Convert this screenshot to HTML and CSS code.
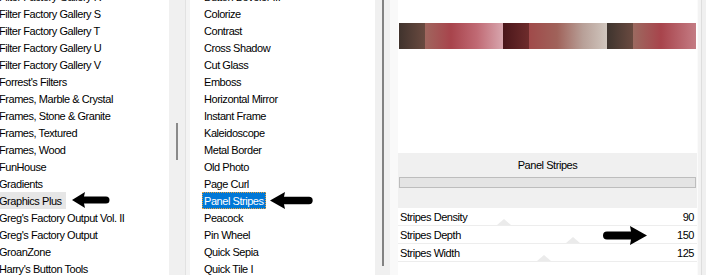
FILE: index.html
```html
<!DOCTYPE html>
<html>
<head>
<meta charset="utf-8">
<link rel="stylesheet" href="styles.css">
</head>
<body>
  <section class="pane pane-left">
    <div class="list">
      <ul>
        <li><span>Filter Factory Gallery R</span></li>
        <li><span>Filter Factory Gallery S</span></li>
        <li><span>Filter Factory Gallery T</span></li>
        <li><span>Filter Factory Gallery U</span></li>
        <li><span>Filter Factory Gallery V</span></li>
        <li><span>Forrest's Filters</span></li>
        <li><span>Frames, Marble &amp; Crystal</span></li>
        <li><span>Frames, Stone &amp; Granite</span></li>
        <li><span>Frames, Textured</span></li>
        <li><span>Frames, Wood</span></li>
        <li><span>FunHouse</span></li>
        <li><span>Gradients</span></li>
        <li class="hover"><span>Graphics Plus</span></li>
        <li><span>Greg's Factory Output Vol. II</span></li>
        <li><span>Greg's Factory Output</span></li>
        <li><span>GroanZone</span></li>
        <li><span>Harry's Button Tools</span></li>
      </ul>
    </div>
    <div class="scroll scroll-left"><div class="thumb"></div></div>
    <div class="gap"></div>
  </section>

  <section class="pane pane-mid">
    <div class="list">
      <ul>
        <li><span>Button Beveler III</span></li>
        <li><span>Colorize</span></li>
        <li><span>Contrast</span></li>
        <li><span>Cross Shadow</span></li>
        <li><span>Cut Glass</span></li>
        <li><span>Emboss</span></li>
        <li><span>Horizontal Mirror</span></li>
        <li><span>Instant Frame</span></li>
        <li><span>Kaleidoscope</span></li>
        <li><span>Metal Border</span></li>
        <li><span>Old Photo</span></li>
        <li><span>Page Curl</span></li>
        <li class="selected"><span>Panel Stripes</span></li>
        <li><span>Peacock</span></li>
        <li><span>Pin Wheel</span></li>
        <li><span>Quick Sepia</span></li>
        <li><span>Quick Tile I</span></li>
      </ul>
    </div>
    <div class="scroll scroll-mid"><div class="thumb"></div></div>
  </section>

  <section class="pane pane-right">
    <div class="lgutter"></div>
    <div class="main">
      <div class="preview"><div class="strip"></div></div>
      <div class="header">
        <div class="title">Panel Stripes</div>
        <div class="bar"></div>
      </div>
      <div class="params">
        <div class="row"><span class="label">Stripes Density</span><span class="value">90</span><i class="tri" style="left:99px"></i></div>
        <div class="row"><span class="label">Stripes Depth</span><span class="value">150</span><i class="tri" style="left:168px"></i></div>
        <div class="row"><span class="label">Stripes Width</span><span class="value">125</span><i class="tri" style="left:139px"></i></div>
      </div>
    </div>
    <div class="rgutter"></div>
  </section>

  <svg class="arrow arrow-a" viewBox="0 0 38 16" width="38" height="16"><path d="M0 8 L13 0 L12 4.5 L34 4.5 A3.5 3.5 0 0 1 34 11.5 L12 11.5 L13 16 Z"/></svg>
  <svg class="arrow arrow-b" viewBox="0 0 43 17" width="43" height="17"><path d="M0 8.5 L15 0 L14 4.8 L39 4.8 A3.7 3.7 0 0 1 39 12.2 L14 12.2 L15 17 Z"/></svg>
  <svg class="arrow arrow-c" viewBox="0 0 44 19" width="44" height="19"><path d="M44 9.5 L27 0 L28 5.5 L4 5.5 A4 4 0 0 0 4 13.5 L28 13.5 L27 19 Z"/></svg>
</body>
</html>
```

FILE: styles.css
```css
html, body {
  margin: 0;
  padding: 0;
}
body {
  position: relative;
  width: 706px;
  height: 275px;
  overflow: hidden;
  display: flex;
  background: #fff;
  color: #000;
  font-family: "Liberation Sans", Arial, sans-serif;
  font-size: 11px;
  letter-spacing: -0.45px;
}

.pane {
  display: flex;
  height: 275px;
}
.pane-left { width: 190px; }
.pane-mid { width: 200px; }
.pane-right { width: 316px; }

.list {
  flex: 1;
  overflow: hidden;
  background: #fff;
}
.list ul {
  margin: -12px 0 0;
  padding: 0;
  list-style: none;
}
.list li {
  height: 17px;
  line-height: 19px;
  white-space: nowrap;
}
.list li span {
  display: inline-block;
  height: 17px;
}
.pane-left .list li span {
  margin-left: -1px;
  padding-right: 4px;
}
.pane-mid .list li span {
  margin-left: 12px;
  padding: 0 2px;
}
.list li.hover span {
  background: #e6e6e6;
}
.list li.selected span {
  background: #0078d7;
  color: #fff;
  outline: 1px dotted #e9a23b;
  outline-offset: -1px;
}

.scroll {
  background: #f0f0f0;
}
.scroll-left {
  width: 16px;
  border-right: 1px solid #e2e2e2;
  padding-top: 123px;
  box-sizing: border-box;
  width: 17px;
}
.scroll-left .thumb {
  width: 2px;
  height: 37px;
  margin-left: 7px;
  background: #8a8a8a;
}
.gap {
  width: 4px;
  background: #f4f4f4;
}
.scroll-mid {
  width: 15px;
}
.scroll-mid .thumb {
  width: 2px;
  height: 266px;
  margin-left: 7px;
  background: #828282;
}

.lgutter {
  width: 8px;
  background: #f9f9f9;
}
.rgutter {
  width: 9px;
  background: #f3f3f3;
  box-shadow: inset -4px 0 0 #f0f0f0, inset -5px 0 0 #dedede, inset 1px 0 0 #fbfbfb;
}
.main {
  width: 299px;
  display: flex;
  flex-direction: column;
}
.preview {
  height: 153px;
  padding: 23px 0 0 1px;
  box-sizing: border-box;
  background: #fff;
}
.strip {
  width: 297px;
  height: 26px;
  background: linear-gradient(to right,
    #40332d 0px, #6a4a40 26px,
    #a0665e 26px, #a8444c 52px, #c06a74 78px, #d8a6ae 104px,
    #4a161a 104px, #6e2c2c 130px,
    #a04a4a 130px, #a0625a 158px, #b8a098 184px, #d0c6be 208px,
    #3e342e 208px, #6a4a40 234px,
    #9c6a60 234px, #a8444c 262px, #c47c84 297px);
}
.header {
  height: 55px;
  background: #f0f0f0;
  padding-top: 4px;
  box-sizing: border-box;
}
.title {
  line-height: 17px;
  text-align: center;
}
.bar {
  margin: 3px 1px 0;
  height: 11px;
  box-sizing: border-box;
  background: #e4e4e4;
  border: 1px solid #bdbdbd;
}
.params {
  background: #fff;
}
.row {
  position: relative;
  display: flex;
  justify-content: space-between;
  height: 17px;
  line-height: 18px;
  border-bottom: 1px solid #ededed;
  padding: 0 3px 0 2px;
}
.row .label, .row .value {
  position: relative;
  z-index: 1;
}
.tri {
  position: absolute;
  bottom: 0;
  width: 0;
  height: 0;
  border-left: 7px solid transparent;
  border-right: 7px solid transparent;
  border-bottom: 6px solid #ebebeb;
}

.arrow {
  position: absolute;
  fill: #000;
}
.arrow-a { left: 72px; top: 192px; }
.arrow-b { left: 270px; top: 192px; }
.arrow-c { left: 603px; top: 226px; }
```
